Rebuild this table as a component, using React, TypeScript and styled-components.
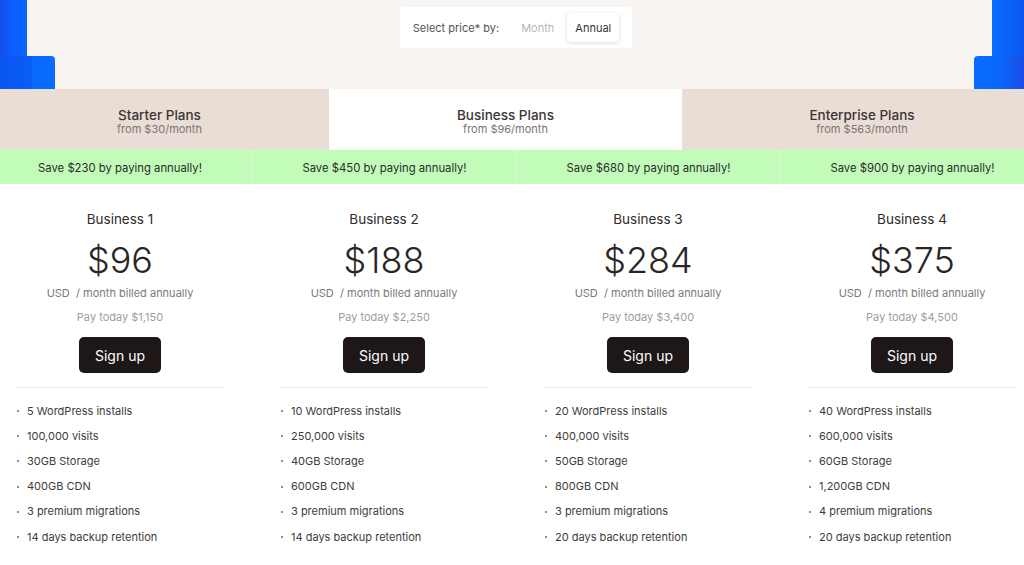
import styled, { createGlobalStyle } from "styled-components";

interface Plan {
  name: string;
  price: string;
  payToday: string;
  save: string;
  features: string[];
}

const plans: Plan[] = [
  {
    name: "Business 1",
    price: "$96",
    payToday: "$1,150",
    save: "$230",
    features: [
      "5 WordPress installs",
      "100,000 visits",
      "30GB Storage",
      "400GB CDN",
      "3 premium migrations",
      "14 days backup retention",
    ],
  },
  {
    name: "Business 2",
    price: "$188",
    payToday: "$2,250",
    save: "$450",
    features: [
      "10 WordPress installs",
      "250,000 visits",
      "40GB Storage",
      "600GB CDN",
      "3 premium migrations",
      "14 days backup retention",
    ],
  },
  {
    name: "Business 3",
    price: "$284",
    payToday: "$3,400",
    save: "$680",
    features: [
      "20 WordPress installs",
      "400,000 visits",
      "50GB Storage",
      "800GB CDN",
      "3 premium migrations",
      "20 days backup retention",
    ],
  },
  {
    name: "Business 4",
    price: "$375",
    payToday: "$4,500",
    save: "$900",
    features: [
      "40 WordPress installs",
      "600,000 visits",
      "60GB Storage",
      "1,200GB CDN",
      "4 premium migrations",
      "20 days backup retention",
    ],
  },
];

const tabs = [
  { title: "Starter Plans", from: "from $30/month", active: false, shift: -5 },
  { title: "Business Plans", from: "from $96/month", active: true, shift: 0 },
  { title: "Enterprise Plans", from: "from $563/month", active: false, shift: 9 },
];

export default function App() {
  return (
    <>
      <GlobalStyle />
      <Page>
        <TopBar>
          <Deco width="55" height="89" viewBox="0 0 55 89">
            <defs>
              <linearGradient id="lg1" x1="0" x2="1" y1="0" y2="0">
                <stop offset="0" stopColor="#1a4de6" />
                <stop offset="0.35" stopColor="#0b5cff" />
                <stop offset="1" stopColor="#0a66ff" />
              </linearGradient>
              <linearGradient id="lg2" x1="0" x2="1" y1="0" y2="0">
                <stop offset="0" stopColor="#0b55f0" />
                <stop offset="0.58" stopColor="#0b5ef8" />
                <stop offset="0.6" stopColor="#0a6cff" />
                <stop offset="1" stopColor="#0a6cff" />
              </linearGradient>
            </defs>
            <rect x="0" y="0" width="27" height="56" fill="url(#lg1)" />
            <path d="M0 56 H51 Q55 56 55 60 V89 H0 Z" fill="url(#lg2)" />
          </Deco>
          <Toggle>
            <ToggleLabel>Select price* by:</ToggleLabel>
            <ToggleOption>Month</ToggleOption>
            <ToggleOption $active>Annual</ToggleOption>
          </Toggle>
          <Deco width="51" height="89" viewBox="0 0 51 89">
            <defs>
              <linearGradient id="rg1" x1="0" x2="1" y1="0" y2="0">
                <stop offset="0" stopColor="#0a6cff" />
                <stop offset="1" stopColor="#0b57f0" />
              </linearGradient>
              <linearGradient id="rg2" x1="0" x2="1" y1="0" y2="0">
                <stop offset="0" stopColor="#0a6cff" />
                <stop offset="0.5" stopColor="#0a66fb" />
                <stop offset="1" stopColor="#1a4de6" />
              </linearGradient>
            </defs>
            <rect x="19" y="0" width="32" height="56" fill="url(#rg1)" />
            <path d="M5 56 H51 V89 H1 V60 Q1 56 5 56 Z" fill="url(#rg2)" />
          </Deco>
        </TopBar>

        <Tabs>
          {tabs.map((t) => (
            <Tab key={t.title} $active={t.active}>
              <TabInner $shift={t.shift}>
                <TabTitle>{t.title}</TabTitle>
                <TabSub>{t.from}</TabSub>
              </TabInner>
            </Tab>
          ))}
        </Tabs>

        <SaveRow>
          {plans.map((p, i) => (
            <SaveCell key={p.name} $first={i === 0}>
              Save {p.save} by paying annually!
            </SaveCell>
          ))}
        </SaveRow>

        <Cards>
          {plans.map((p) => (
            <Card key={p.name}>
              <PlanName>{p.name}</PlanName>
              <Price>{p.price}</Price>
              <Billing>USD&nbsp; / month billed annually</Billing>
              <PayToday>Pay today {p.payToday}</PayToday>
              <SignUp>Sign up</SignUp>
              <Divider />
              <Features>
                {p.features.map((f) => (
                  <Feature key={f}>{f}</Feature>
                ))}
              </Features>
            </Card>
          ))}
        </Cards>
      </Page>
    </>
  );
}

const GlobalStyle = createGlobalStyle`
  html, body {
    margin: 0;
    padding: 0;
    overflow: hidden;
    background: #ffffff;
  }
  body {
    font-family: Inter, "Noto Sans", "Liberation Sans", sans-serif;
    color: #2b2b2b;
  }
  * { box-sizing: border-box; }
`;

const Page = styled.div`
  width: 1024px;
  height: 565px;
  overflow: hidden;
  background: #ffffff;
`;

const TopBar = styled.header`
  display: flex;
  justify-content: space-between;
  align-items: flex-start;
  height: 89px;
  background: #f7f4f1;
`;

const Deco = styled.svg`
  display: block;
  flex-shrink: 0;
`;

const Toggle = styled.div`
  display: flex;
  align-items: center;
  gap: 5px;
  margin-top: 7px;
  margin-left: 4px;
  height: 41px;
  padding: 0 13px;
  background: #ffffff;
  border-radius: 2px;
`;

const ToggleLabel = styled.span`
  font-size: 11px;
  color: #555252;
  margin-right: 9px;
`;

const ToggleOption = styled.span<{ $active?: boolean }>`
  display: flex;
  align-items: center;
  height: 29px;
  padding: 0 8px;
  font-size: 11px;
  border-radius: 4px;
  color: ${({ $active }) => ($active ? "#333" : "#b9b4b2")};
  background: ${({ $active }) => ($active ? "#fff" : "transparent")};
  box-shadow: ${({ $active }) =>
    $active ? "0 1px 4px rgba(0,0,0,0.14)" : "none"};
`;

const Tabs = styled.nav`
  display: grid;
  grid-template-columns: 329px 353px 1fr;
  height: 61px;
`;

const Tab = styled.div<{ $active: boolean }>`
  display: flex;
  align-items: center;
  justify-content: center;
  background: ${({ $active }) => ($active ? "#ffffff" : "#e9ddd6")};
`;

const TabInner = styled.div<{ $shift: number }>`
  display: flex;
  flex-direction: column;
  align-items: center;
  transform: translateX(${({ $shift }) => $shift}px);
  padding-top: 2px;
`;

const TabTitle = styled.div`
  font-size: 13.5px;
  font-weight: 500;
  color: #3a3535;
  line-height: 16px;
  margin-top: 1px;
`;

const TabSub = styled.div`
  font-size: 11px;
  color: #7a7473;
  line-height: 13px;
`;

const SaveRow = styled.div`
  display: flex;
  margin-left: -12px;
  height: 34px;
  background: #c1fcb9;
`;

const SaveCell = styled.div<{ $first: boolean }>`
  flex: 0 0 264px;
  display: flex;
  align-items: center;
  justify-content: center;
  padding-top: 1px;
  font-size: 11.3px;
  color: #2a2a2a;
  border-left: ${({ $first }) => ($first ? "none" : "1px solid #d6fcd0")};
`;

const Cards = styled.section`
  display: grid;
  grid-template-columns: repeat(4, 240px);
  column-gap: 24px;
  width: 1032px;
`;

const Card = styled.article`
  display: flex;
  flex-direction: column;
  align-items: center;
  padding: 25px 16px 0;
`;

const PlanName = styled.div`
  font-size: 13.5px;
  line-height: 20px;
  color: #2f2b2b;
`;

const Price = styled.div`
  margin-top: 9px;
  font-size: 36px;
  font-weight: 300;
  line-height: 44px;
  color: #2a2626;
`;

const Billing = styled.div`
  margin-top: 3px;
  font-size: 11px;
  line-height: 16px;
  color: #7d7979;
`;

const PayToday = styled.div`
  margin-top: 8px;
  font-size: 11px;
  line-height: 16px;
  color: #a09c9b;
`;

const SignUp = styled.button`
  margin-top: 12px;
  width: 82px;
  height: 36px;
  border: none;
  border-radius: 5px;
  background: #1d1718;
  color: #ffffff;
  font-family: inherit;
  font-size: 14px;
  cursor: pointer;
`;

const Divider = styled.hr`
  align-self: stretch;
  margin: 14px 0 0;
  border: none;
  border-top: 1px solid #eeeceb;
`;

const Features = styled.ul`
  align-self: stretch;
  list-style: none;
  margin: 10px 0 0;
  padding: 0;
`;

const Feature = styled.li`
  display: flex;
  align-items: center;
  height: 25.2px;
  font-size: 11px;
  color: #403c3c;

  &::before {
    content: "";
    width: 2px;
    height: 2px;
    border-radius: 50%;
    background: #6b6868;
    margin: 1px 8px 0 1px;
  }
`;
